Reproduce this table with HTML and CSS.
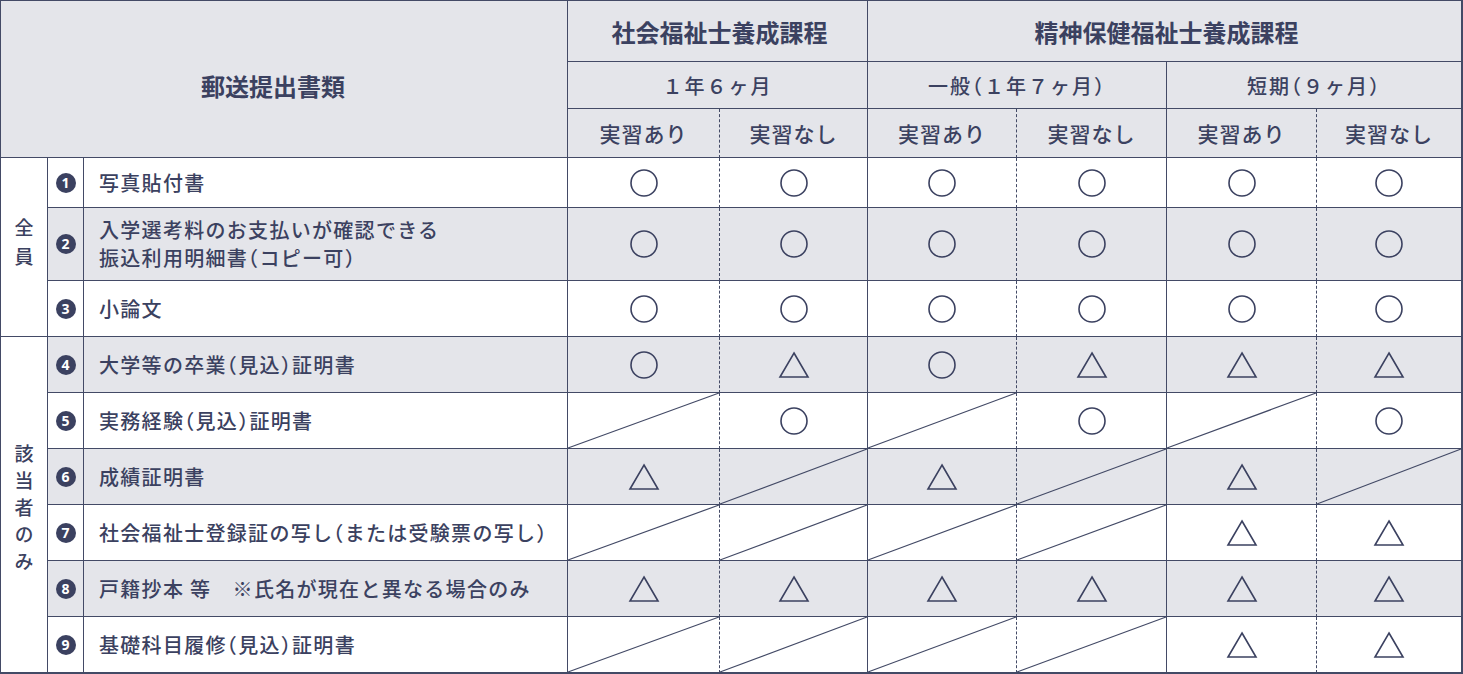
FILE: index.html
```
<!DOCTYPE html>
<html lang="ja">
<head>
<meta charset="utf-8">
<title>郵送提出書類</title>
<link rel="stylesheet" href="styles.css">
</head>
<body>
<div class="sheet">
  <div class="c hd title">郵送提出書類</div>
  <div class="c hd course course-a">社会福祉士養成課程</div>
  <div class="c hd course course-b">精神保健福祉士養成課程</div>
  <div class="c hd term">１年６ヶ月</div>
  <div class="c hd term">一般<span class="pp">（</span>１年７ヶ月<span class="pp">）</span></div>
  <div class="c hd term">短期<span class="pp">（</span>９ヶ月<span class="pp">）</span></div>
  <div class="c hd sub dash">実習あり</div>
  <div class="c hd sub">実習なし</div>
  <div class="c hd sub dash">実習あり</div>
  <div class="c hd sub">実習なし</div>
  <div class="c hd sub dash">実習あり</div>
  <div class="c hd sub">実習なし</div>

  <div class="c cat cat-all">全員</div>
  <div class="c cat cat-some">該当者のみ</div>

  <!-- 1 -->
  <div class="c num"><span class="dot">1</span></div>
  <div class="c label"><span>写真貼付書</span></div>
  <div class="c v dash"><svg class="m" viewBox="0 0 28 28"><circle cx="14" cy="14" r="13"/></svg></div>
  <div class="c v"><svg class="m" viewBox="0 0 28 28"><circle cx="14" cy="14" r="13"/></svg></div>
  <div class="c v dash"><svg class="m" viewBox="0 0 28 28"><circle cx="14" cy="14" r="13"/></svg></div>
  <div class="c v"><svg class="m" viewBox="0 0 28 28"><circle cx="14" cy="14" r="13"/></svg></div>
  <div class="c v dash"><svg class="m" viewBox="0 0 28 28"><circle cx="14" cy="14" r="13"/></svg></div>
  <div class="c v"><svg class="m" viewBox="0 0 28 28"><circle cx="14" cy="14" r="13"/></svg></div>

  <!-- 2 -->
  <div class="c num alt"><span class="dot">2</span></div>
  <div class="c label alt"><span>入学選考料のお支払いが確認できる<br>振込利用明細書<span class="pp">（</span>コピー可<span class="pp">）</span></span></div>
  <div class="c v alt dash"><svg class="m" viewBox="0 0 28 28"><circle cx="14" cy="14" r="13"/></svg></div>
  <div class="c v alt"><svg class="m" viewBox="0 0 28 28"><circle cx="14" cy="14" r="13"/></svg></div>
  <div class="c v alt dash"><svg class="m" viewBox="0 0 28 28"><circle cx="14" cy="14" r="13"/></svg></div>
  <div class="c v alt"><svg class="m" viewBox="0 0 28 28"><circle cx="14" cy="14" r="13"/></svg></div>
  <div class="c v alt dash"><svg class="m" viewBox="0 0 28 28"><circle cx="14" cy="14" r="13"/></svg></div>
  <div class="c v alt"><svg class="m" viewBox="0 0 28 28"><circle cx="14" cy="14" r="13"/></svg></div>

  <!-- 3 -->
  <div class="c num"><span class="dot">3</span></div>
  <div class="c label"><span>小論文</span></div>
  <div class="c v dash"><svg class="m" viewBox="0 0 28 28"><circle cx="14" cy="14" r="13"/></svg></div>
  <div class="c v"><svg class="m" viewBox="0 0 28 28"><circle cx="14" cy="14" r="13"/></svg></div>
  <div class="c v dash"><svg class="m" viewBox="0 0 28 28"><circle cx="14" cy="14" r="13"/></svg></div>
  <div class="c v"><svg class="m" viewBox="0 0 28 28"><circle cx="14" cy="14" r="13"/></svg></div>
  <div class="c v dash"><svg class="m" viewBox="0 0 28 28"><circle cx="14" cy="14" r="13"/></svg></div>
  <div class="c v"><svg class="m" viewBox="0 0 28 28"><circle cx="14" cy="14" r="13"/></svg></div>

  <!-- 4 -->
  <div class="c num alt"><span class="dot">4</span></div>
  <div class="c label alt"><span>大学等の卒業<span class="pp">（</span>見込<span class="pp">）</span>証明書</span></div>
  <div class="c v alt dash"><svg class="m" viewBox="0 0 28 28"><circle cx="14" cy="14" r="13"/></svg></div>
  <div class="c v alt"><svg class="m t" viewBox="0 0 30 26"><path d="M15 1 29 25H1Z"/></svg></div>
  <div class="c v alt dash"><svg class="m" viewBox="0 0 28 28"><circle cx="14" cy="14" r="13"/></svg></div>
  <div class="c v alt"><svg class="m t" viewBox="0 0 30 26"><path d="M15 1 29 25H1Z"/></svg></div>
  <div class="c v alt dash"><svg class="m t" viewBox="0 0 30 26"><path d="M15 1 29 25H1Z"/></svg></div>
  <div class="c v alt"><svg class="m t" viewBox="0 0 30 26"><path d="M15 1 29 25H1Z"/></svg></div>

  <!-- 5 -->
  <div class="c num"><span class="dot">5</span></div>
  <div class="c label"><span>実務経験<span class="pp">（</span>見込<span class="pp">）</span>証明書</span></div>
  <div class="c x dash"><svg viewBox="0 0 10 10" preserveAspectRatio="none"><path d="M0 10 10 0"/></svg></div>
  <div class="c v"><svg class="m" viewBox="0 0 28 28"><circle cx="14" cy="14" r="13"/></svg></div>
  <div class="c x dash"><svg viewBox="0 0 10 10" preserveAspectRatio="none"><path d="M0 10 10 0"/></svg></div>
  <div class="c v"><svg class="m" viewBox="0 0 28 28"><circle cx="14" cy="14" r="13"/></svg></div>
  <div class="c x dash"><svg viewBox="0 0 10 10" preserveAspectRatio="none"><path d="M0 10 10 0"/></svg></div>
  <div class="c v"><svg class="m" viewBox="0 0 28 28"><circle cx="14" cy="14" r="13"/></svg></div>

  <!-- 6 -->
  <div class="c num alt"><span class="dot">6</span></div>
  <div class="c label alt"><span>成績証明書</span></div>
  <div class="c v alt dash"><svg class="m t" viewBox="0 0 30 26"><path d="M15 1 29 25H1Z"/></svg></div>
  <div class="c x alt"><svg viewBox="0 0 10 10" preserveAspectRatio="none"><path d="M0 10 10 0"/></svg></div>
  <div class="c v alt dash"><svg class="m t" viewBox="0 0 30 26"><path d="M15 1 29 25H1Z"/></svg></div>
  <div class="c x alt"><svg viewBox="0 0 10 10" preserveAspectRatio="none"><path d="M0 10 10 0"/></svg></div>
  <div class="c v alt dash"><svg class="m t" viewBox="0 0 30 26"><path d="M15 1 29 25H1Z"/></svg></div>
  <div class="c x alt"><svg viewBox="0 0 10 10" preserveAspectRatio="none"><path d="M0 10 10 0"/></svg></div>

  <!-- 7 -->
  <div class="c num"><span class="dot">7</span></div>
  <div class="c label"><span>社会福祉士登録証の写し<span class="pp">（</span>または受験票の写し<span class="pp">）</span></span></div>
  <div class="c x dash"><svg viewBox="0 0 10 10" preserveAspectRatio="none"><path d="M0 10 10 0"/></svg></div>
  <div class="c x"><svg viewBox="0 0 10 10" preserveAspectRatio="none"><path d="M0 10 10 0"/></svg></div>
  <div class="c x dash"><svg viewBox="0 0 10 10" preserveAspectRatio="none"><path d="M0 10 10 0"/></svg></div>
  <div class="c x"><svg viewBox="0 0 10 10" preserveAspectRatio="none"><path d="M0 10 10 0"/></svg></div>
  <div class="c v dash"><svg class="m t" viewBox="0 0 30 26"><path d="M15 1 29 25H1Z"/></svg></div>
  <div class="c v"><svg class="m t" viewBox="0 0 30 26"><path d="M15 1 29 25H1Z"/></svg></div>

  <!-- 8 -->
  <div class="c num alt"><span class="dot">8</span></div>
  <div class="c label alt"><span>戸籍抄本 等　※氏名が現在と異なる場合のみ</span></div>
  <div class="c v alt dash"><svg class="m t" viewBox="0 0 30 26"><path d="M15 1 29 25H1Z"/></svg></div>
  <div class="c v alt"><svg class="m t" viewBox="0 0 30 26"><path d="M15 1 29 25H1Z"/></svg></div>
  <div class="c v alt dash"><svg class="m t" viewBox="0 0 30 26"><path d="M15 1 29 25H1Z"/></svg></div>
  <div class="c v alt"><svg class="m t" viewBox="0 0 30 26"><path d="M15 1 29 25H1Z"/></svg></div>
  <div class="c v alt dash"><svg class="m t" viewBox="0 0 30 26"><path d="M15 1 29 25H1Z"/></svg></div>
  <div class="c v alt"><svg class="m t" viewBox="0 0 30 26"><path d="M15 1 29 25H1Z"/></svg></div>

  <!-- 9 -->
  <div class="c num"><span class="dot">9</span></div>
  <div class="c label"><span>基礎科目履修<span class="pp">（</span>見込<span class="pp">）</span>証明書</span></div>
  <div class="c x dash"><svg viewBox="0 0 10 10" preserveAspectRatio="none"><path d="M0 10 10 0"/></svg></div>
  <div class="c x"><svg viewBox="0 0 10 10" preserveAspectRatio="none"><path d="M0 10 10 0"/></svg></div>
  <div class="c x dash"><svg viewBox="0 0 10 10" preserveAspectRatio="none"><path d="M0 10 10 0"/></svg></div>
  <div class="c x"><svg viewBox="0 0 10 10" preserveAspectRatio="none"><path d="M0 10 10 0"/></svg></div>
  <div class="c v dash"><svg class="m t" viewBox="0 0 30 26"><path d="M15 1 29 25H1Z"/></svg></div>
  <div class="c v"><svg class="m t" viewBox="0 0 30 26"><path d="M15 1 29 25H1Z"/></svg></div>
</div>
</body>
</html>
```

FILE: styles.css
```
:root {
  --ink: #3b4160;
  --line: #434a66;
  --bg: #e4e5ea;
}

* {
  box-sizing: border-box;
}

html,
body {
  margin: 0;
  padding: 0;
  background: #fff;
}

body {
  font-family: "Noto Sans CJK JP", "Noto Sans", sans-serif;
  color: var(--ink);
}

.sheet {
  display: grid;
  width: 1463px;
  grid-template-columns: 47px 36px 484px 152px 148px 149px 150px 150px 145px;
  grid-template-rows: 61px 47px 49px 50px 73px repeat(7, 56px);
  border-top: 1px solid var(--line);
  border-left: 1px solid var(--line);
  border-right: 1px solid var(--line);
  border-bottom: 1px solid var(--line);
}

.c {
  border-right: 1px solid var(--line);
  border-bottom: 1px solid var(--line);
  display: flex;
  align-items: center;
  justify-content: center;
  min-width: 0;
}

.dash {
  border-right-style: dashed;
}

.hd {
  background: var(--bg);
}

.title {
  grid-column: 1 / 4;
  grid-row: 1 / 4;
  font-size: 24px;
  font-weight: 700;
  padding: 13px 22px 0 0;
}

.course {
  grid-row: 1;
  font-size: 24px;
  font-weight: 700;
  padding-left: 4px;
}

.course-a {
  grid-column: span 2;
}

.course-b {
  grid-column: span 4;
}

.term {
  grid-row: 2;
  grid-column: span 2;
  font-size: 20px;
  font-weight: 500;
  letter-spacing: 2px;
}

.sub {
  grid-row: 3;
  font-size: 21px;
  font-weight: 500;
  letter-spacing: 1px;
}

.pp {
  font-feature-settings: "halt";
}

.cat {
  grid-column: 1;
  writing-mode: vertical-rl;
  text-orientation: upright;
  font-size: 19px;
  font-weight: 500;
  background: #fff;
}

.cat-all {
  grid-row: 4 / span 3;
  letter-spacing: 10px;
}

.cat-some {
  grid-row: 7 / span 6;
  letter-spacing: 8px;
  padding-top: 13px;
}

.dot {
  flex: none;
  width: 20px;
  height: 20px;
  border-radius: 50%;
  background: var(--ink);
  color: #fff;
  font: 700 14px/1 "Noto Sans", "DejaVu Sans", sans-serif;
  display: flex;
  align-items: center;
  justify-content: center;
}

.label {
  justify-content: flex-start;
  padding-left: 15px;
  font-size: 20px;
  font-weight: 500;
  letter-spacing: 1.3px;
  line-height: 28px;
}

.alt {
  background: var(--bg);
}

.m {
  flex: none;
  width: 28px;
  height: 28px;
  fill: none;
  stroke: var(--ink);
  stroke-width: 1.6;
  overflow: visible;
}

.m.t {
  width: 30px;
  height: 26px;
  stroke-width: 1.6;
  stroke-linejoin: miter;
}

.x {
  display: block;
}

.x svg {
  display: block;
  width: 100%;
  height: 100%;
  overflow: visible;
}

.x path {
  fill: none;
  stroke: var(--line);
  stroke-width: 1.2;
  vector-effect: non-scaling-stroke;
}
```
